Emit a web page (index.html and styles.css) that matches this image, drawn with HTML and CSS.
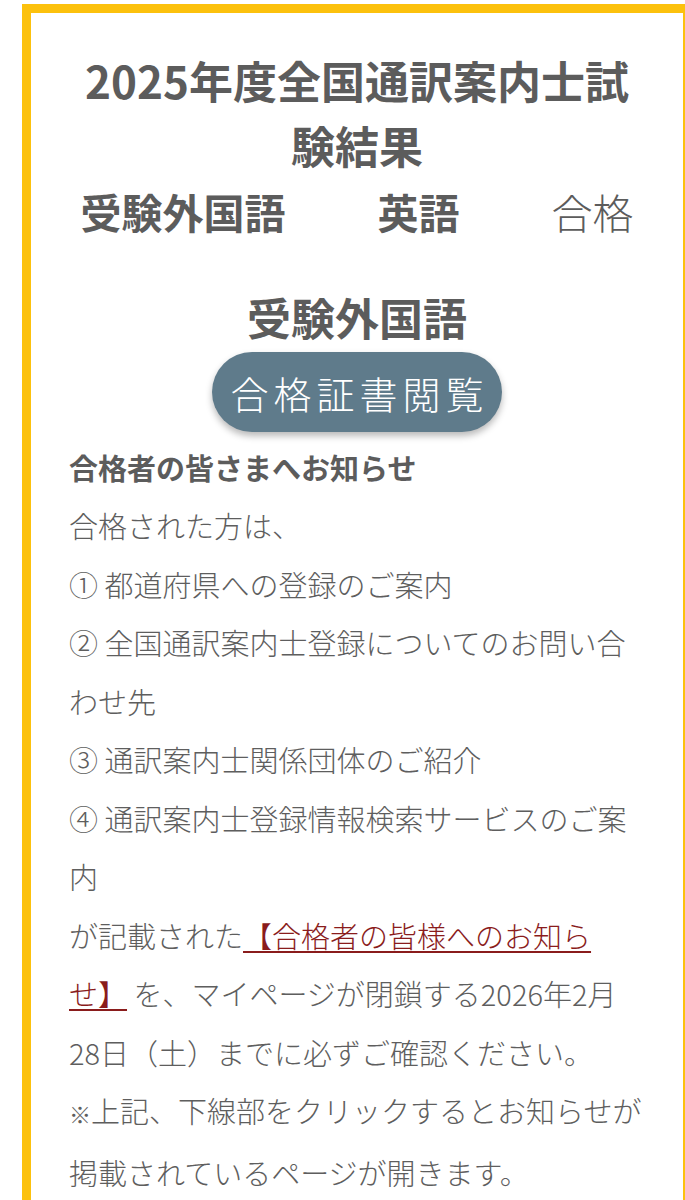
FILE: index.html
```html
<!DOCTYPE html>
<html lang="ja">
<head>
<meta charset="utf-8">
<title>2025年度全国通訳案内士試験結果</title>
<link rel="stylesheet" href="styles.css">
</head>
<body>
<div class="frame">
  <h1 class="title">2025年度全国通訳案内士試験結果</h1>
  <div class="result-row">
    <span class="cell strong">受験外国語</span>
    <span class="cell strong">英語</span>
    <span class="cell">合格</span>
  </div>
  <h2 class="lang-heading">受験外国語</h2>
  <div class="btn-wrap">
    <a class="cert-btn" href="#">合格証書閲覧</a>
  </div>
  <p class="notice-title">合格者の皆さまへお知らせ</p>
  <div class="notice-body">
    <p>合格された方は、</p>
    <p>① 都道府県への登録のご案内</p>
    <p>② 全国通訳案内士登録についてのお問い合わせ先</p>
    <p>③ 通訳案内士関係団体のご紹介</p>
    <p>④ 通訳案内士登録情報検索サービスのご案内</p>
    <p>が記載された<a class="notice-link" href="#">【合格者の皆様へのお知らせ】</a> を、マイページが閉鎖する2026年2月28日（土）までに必ずご確認ください。</p>
    <p><span class="kome">※</span>上記、下線部をクリックするとお知らせが掲載されているページが開きます。</p>
  </div>
</div>
</body>
</html>
```
FILE: styles.css
```css
html {
  overflow-x: hidden;
}
body {
  margin: 0;
  background: #ffffff;
  font-family: "Noto Sans CJK JP", "Noto Sans", sans-serif;
  color: #5e5e5e;
}
.frame {
  margin: 4px 0 0 22px;
  width: 576px;
  padding: 35px 38px 40px 38px;
  border: 9px solid #fcc10d;
  border-bottom: none;
  background: #ffffff;
}
.title {
  margin: 0;
  font-size: 44px;
  line-height: 65px;
  font-weight: 700;
  text-align: center;
  color: #5c5c5c;
}
.result-row {
  display: flex;
  justify-content: center;
  gap: 92px;
  font-size: 41px;
  line-height: 66px;
  color: #5c5c5c;
}
.cell {
  font-weight: 300;
}
.cell.strong {
  font-weight: 700;
}
.lang-heading {
  margin: 40px 0 0 0;
  font-size: 44px;
  line-height: 66px;
  font-weight: 700;
  text-align: center;
  color: #5c5c5c;
}
.btn-wrap {
  display: flex;
  justify-content: center;
  margin-top: 2px;
}
.cert-btn {
  display: inline-flex;
  align-items: center;
  height: 80px;
  padding: 0 13px 0 18px;
  border-radius: 40px;
  background: #5f7b8b;
  color: #ffffff;
  font-size: 38px;
  font-weight: 300;
  letter-spacing: 5px;
  text-decoration: none;
  box-shadow: 0 4px 7px rgba(0, 0, 0, 0.28);
}
.notice-title {
  margin: 6px 0 0 0;
  font-size: 29px;
  line-height: 58px;
  font-weight: 700;
  color: #5c5c5c;
}
.notice-body p {
  margin: 0;
  font-size: 29px;
  line-height: 58.5px;
  font-weight: 300;
}
.notice-link {
  color: #8a1c1c;
  text-decoration: underline;
  text-decoration-thickness: 2px;
  text-underline-offset: 3px;
}
.kome {
  font-size: 22px;
  font-weight: 700;
}
```
